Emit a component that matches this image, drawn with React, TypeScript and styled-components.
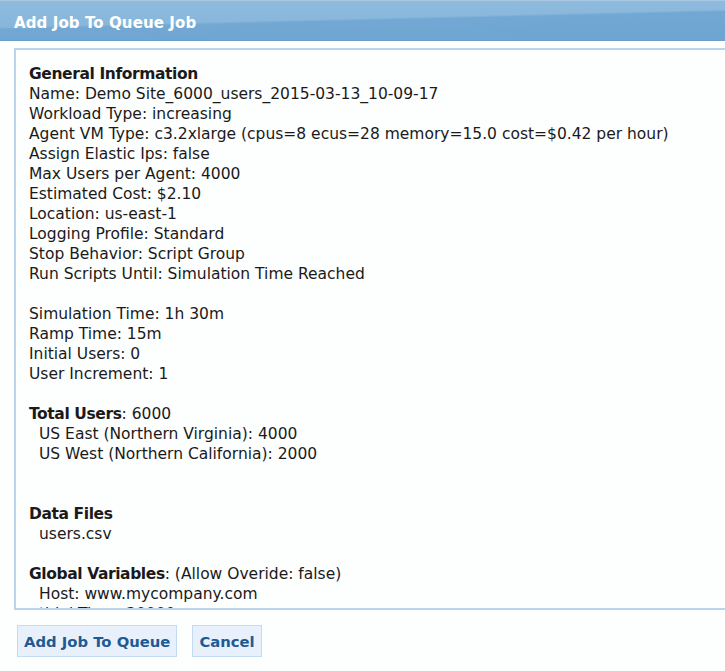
import React from "react";
import styled, { createGlobalStyle } from "styled-components";

const Global = createGlobalStyle`
  html, body { margin: 0; padding: 0; background: #fdfefe; }
  body { font-family: "DejaVu Sans", Verdana, sans-serif; overflow: hidden; }
`;

const Dialog = styled.div`
  width: 725px;
  height: 671px;
  display: flex;
  flex-direction: column;
  background: #fdfefe;
`;

const TitleBar = styled.div`
  box-sizing: border-box;
  height: 41px;
  border-top: 1px solid #a9c8e2;
  border-bottom: 1px solid #6a9fcb;
  display: flex;
  align-items: center;
  padding: 4px 0 0 14px;
  background:
    linear-gradient(178.6deg, rgba(0,0,0,0) 46%, #72a8d3 50%, #6ea5d1 100%),
    linear-gradient(180deg, #8dbadd 0%, #86b5da 100%);
`;

const Title = styled.h1`
  margin: 0;
  font-size: 15px;
  font-weight: bold;
  color: #ffffff;
  letter-spacing: 0.1px;
`;

const Body = styled.div`
  flex: 1;
  display: flex;
  flex-direction: column;
  padding: 7px 0 0 14px;
`;

const InfoBox = styled.div`
  height: 562px;
  box-sizing: border-box;
  border: 2px solid #bcd4ea;
  border-right: none;
  overflow: hidden;
  padding: 14px 0 0 13px;
  font-size: 15.5px;
  line-height: 20px;
  color: #1a1a1a;
`;

const Line = styled.div<{ $indent?: boolean }>`
  height: 20px;
  white-space: nowrap;
  padding-left: ${(p) => (p.$indent ? "10px" : "0")};
`;

const Strong = styled.span`
  font-weight: bold;
  letter-spacing: -0.4px;
`;

const Gap = styled.div<{ $lines?: number }>`
  height: ${(p) => (p.$lines ?? 1) * 20}px;
`;

const Actions = styled.div`
  display: flex;
  gap: 15px;
  padding: 15px 0 0 3px;
`;

const Button = styled.button`
  height: 32px;
  padding: 0 6px;
  background: #e8f1fb;
  border: 1px solid #c4dcf2;
  color: #1e5a93;
  font-family: "DejaVu Sans", Verdana, sans-serif;
  font-size: 14.8px;
  font-weight: bold;
  cursor: pointer;
`;

export default function App() {
  return (
    <>
      <Global />
      <Dialog>
        <TitleBar>
          <Title>Add Job To Queue Job</Title>
        </TitleBar>
        <Body>
          <InfoBox>
            <Line><Strong>General Information</Strong></Line>
            <Line>Name: Demo Site_6000_users_2015-03-13_10-09-17</Line>
            <Line>Workload Type: increasing</Line>
            <Line>Agent VM Type: c3.2xlarge (cpus=8 ecus=28 memory=15.0 cost=$0.42 per hour)</Line>
            <Line>Assign Elastic Ips: false</Line>
            <Line>Max Users per Agent: 4000</Line>
            <Line>Estimated Cost: $2.10</Line>
            <Line>Location: us-east-1</Line>
            <Line>Logging Profile: Standard</Line>
            <Line>Stop Behavior: Script Group</Line>
            <Line>Run Scripts Until: Simulation Time Reached</Line>
            <Gap />
            <Line>Simulation Time: 1h 30m</Line>
            <Line>Ramp Time: 15m</Line>
            <Line>Initial Users: 0</Line>
            <Line>User Increment: 1</Line>
            <Gap />
            <Line><Strong>Total Users</Strong>: 6000</Line>
            <Line $indent>US East (Northern Virginia): 4000</Line>
            <Line $indent>US West (Northern California): 2000</Line>
            <Gap $lines={2} />
            <Line><Strong>Data Files</Strong></Line>
            <Line $indent>users.csv</Line>
            <Gap />
            <Line><Strong>Global Variables</Strong>: (Allow Overide: false)</Line>
            <Line $indent>Host: www.mycompany.com</Line>
            <Line $indent>thinkTime: 30000</Line>
          </InfoBox>
          <Actions>
            <Button>Add Job To Queue</Button>
            <Button>Cancel</Button>
          </Actions>
        </Body>
      </Dialog>
    </>
  );
}
